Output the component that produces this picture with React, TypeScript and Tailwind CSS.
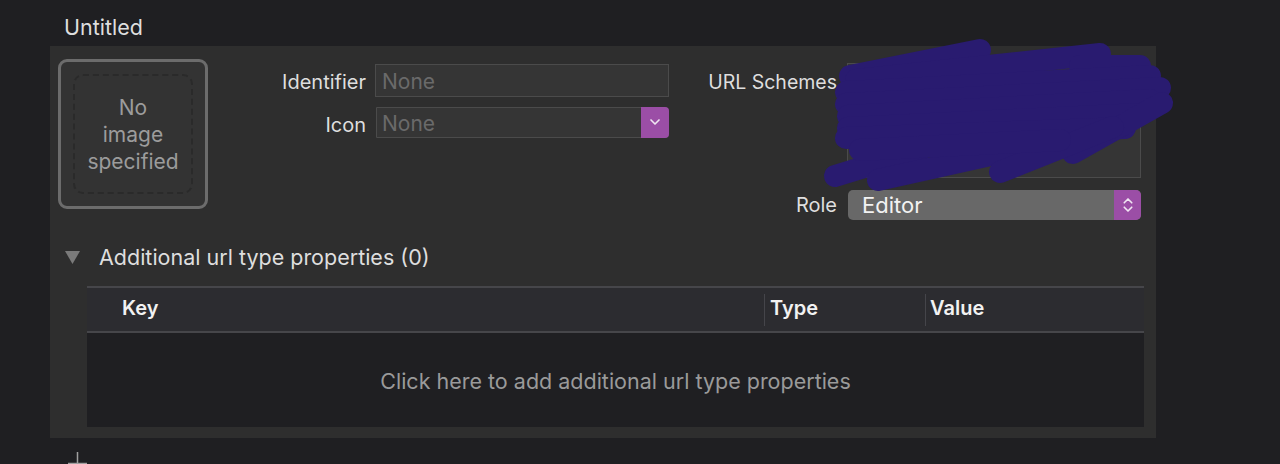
import { ChevronDown, ChevronsUpDown } from 'lucide-react';

const font = { fontFamily: 'Inter, "Noto Sans", sans-serif' };

function Scribble() {
  const strokes = [
    'M850 76 L980 50',
    'M856 80 L1100 54',
    'M1080 66 L1140 66',
    'M846 92 L1150 76',
    'M846 104 L1160 88',
    'M848 116 L1150 100',
    'M848 128 L1140 114',
    'M846 138 L1125 128',
    'M1073 153 L1162 103',
    'M835 176 L920 150',
    'M878 180 L1013 150',
    'M1000 172 L1113 127',
    'M860 150 L1060 140',
  ];
  return (
    <svg className="absolute left-0 top-0 pointer-events-none" width="1280" height="464">
      <g stroke="#291b70" strokeWidth="22" strokeLinecap="round" fill="none">
        {strokes.map((d) => (
          <path key={d} d={d} />
        ))}
      </g>
    </svg>
  );
}

export default function App() {
  return (
    <div className="relative w-[1280px] h-[464px] overflow-hidden bg-[#1f1f22] text-[20px] text-[#dedede]" style={font}>
      <div className="pl-[64px] pt-[14px] h-[46px] leading-[26px] text-[21.5px]">Untitled</div>

      <div className="ml-[50px] w-[1106px] h-[392px] bg-[#2e2e2e] flex flex-col">
        <div className="flex pl-[8px] pt-[13px] h-[190px]">
          <div className="w-[150px] h-[150px] rounded-[9px] border-[3px] border-[#6c6c6c] bg-[#333333] p-[12px]">
            <div className="w-full h-full rounded-[10px] border-2 border-dashed border-[#2a2a2a] flex items-center justify-center text-center text-[#9c9c9c] leading-[27px] text-[21px]">
              No
              <br />
              image
              <br />
              specified
            </div>
          </div>

          <div className="flex flex-col pt-[4px]">
            <div className="flex items-center h-[34px]">
              <div className="w-[158px] text-right pt-[3px]">Identifier</div>
              <div className="ml-[9px] w-[294px] h-[33px] bg-[#353535] border border-[#4b4b4b] px-[6px] pt-[3px] flex items-center text-[#6a6a6a] text-[21px]">
                None
              </div>
            </div>
            <div className="flex items-center h-[30px] mt-[10px]">
              <div className="w-[158px] text-right pt-[5px]">Icon</div>
              <div className="ml-[10px] w-[293px] h-[31px] bg-[#353535] border border-[#4b4b4b] rounded-r-[4px] flex items-center">
                <span className="flex-1 px-[5px] pt-[4px] text-[#6a6a6a] text-[21px]">None</span>
                <span className="w-[28px] h-[31px] -mr-px -my-px bg-[#9b4ea6] rounded-r-[4px] flex items-center justify-center">
                  <ChevronDown size={16} strokeWidth={2.5} color="#f0e6f2" />
                </span>
              </div>
            </div>
          </div>

          <div className="flex flex-col pt-[4px]">
            <div className="flex items-start">
              <div className="w-[168px] text-right h-[36px] leading-[36px] text-[19.5px] pt-[1px]">URL Schemes</div>
              <div className="ml-[10px] w-[294px] h-[115px] bg-[#353535] border border-[#4b4b4b]" />
            </div>
            <div className="flex items-center mt-[12px]">
              <div className="w-[168px] text-right">Role</div>
              <div className="ml-[11px] w-[293px] h-[30px] bg-[#686868] rounded-[5px] flex items-center overflow-hidden">
                <span className="flex-1 px-[14px] text-[#f2f2f2] text-[22px]">Editor</span>
                <span className="w-[27px] h-full bg-[#9b4ea6] flex items-center justify-center">
                  <ChevronsUpDown size={18} strokeWidth={2.2} color="#f0e6f2" />
                </span>
              </div>
            </div>
          </div>
        </div>

        <div className="flex items-center h-[43px] pl-[15px]">
          <svg width="15" height="13" viewBox="0 0 15 13">
            <path d="M0 0 L15 0 L7.5 13 Z" fill="#7a7a7a" />
          </svg>
          <span className="ml-[19px] text-[21.5px] text-[#dedede]">Additional url type properties (0)</span>
        </div>

        <div className="ml-[37px] mr-[12px] mt-[7px] flex flex-col">
          <div className="h-[47px] bg-[#2c2c30] border-t-2 border-b-2 border-[#46464a] flex items-center font-semibold text-[#f2f2f2] text-[20px] pb-[3px]">
            <div className="w-[677px] pl-[35px]">Key</div>
            <div className="w-px h-[32px] mt-[3px] bg-[#45454a]" />
            <div className="w-[160px] pl-[5px]">Type</div>
            <div className="w-px h-[32px] mt-[3px] bg-[#45454a]" />
            <div className="pl-[4px]">Value</div>
          </div>
          <div className="h-[94px] bg-[#1f1f22] flex items-center justify-center pt-[2px] text-[#9a9a9a] text-[21.5px]">
            Click here to add additional url type properties
          </div>
        </div>
      </div>

      <div className="pl-[68px] pt-[14px]">
        <svg width="19" height="14" viewBox="0 0 19 14">
          <path d="M9.5 0 V14 M0 11.5 H19" stroke="#a0a0a0" strokeWidth="1.5" />
        </svg>
      </div>

      <Scribble />
    </div>
  );
}
